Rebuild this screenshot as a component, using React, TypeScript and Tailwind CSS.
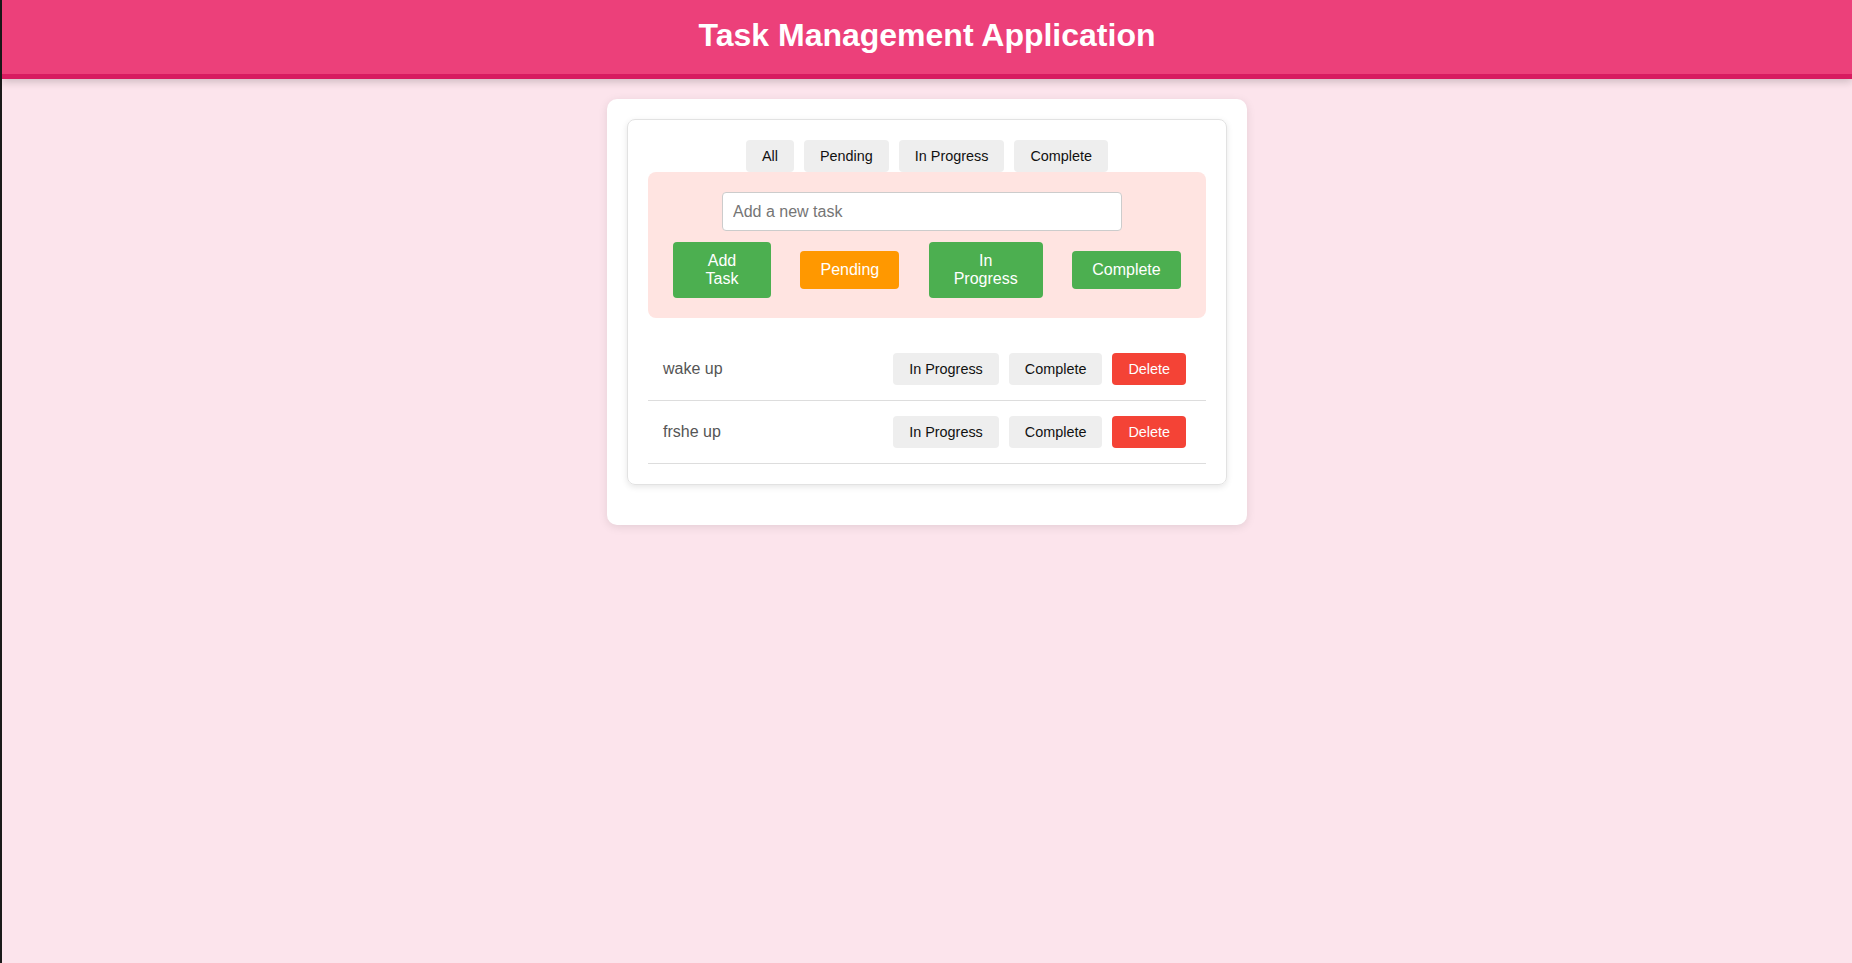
import React, { useState } from "react";

type Status = "Pending" | "In Progress" | "Complete";

interface Task {
  id: number;
  text: string;
  status: Status;
}

const filters = ["All", "Pending", "In Progress", "Complete"];

const App: React.FC = () => {
  const [tasks, setTasks] = useState<Task[]>([
    { id: 1, text: "wake up", status: "Pending" },
    { id: 2, text: "frshe up", status: "Pending" },
  ]);
  const [input, setInput] = useState("");
  const [filter, setFilter] = useState("All");

  const addTask = () => {
    if (!input.trim()) return;
    setTasks([...tasks, { id: Date.now(), text: input, status: "Pending" }]);
    setInput("");
  };

  const setStatus = (id: number, status: Status) =>
    setTasks(tasks.map((t) => (t.id === id ? { ...t, status } : t)));

  const shown = tasks.filter((t) => filter === "All" || t.status === filter);

  return (
    <div
      className="min-h-screen bg-[#fce4ec] border-l-2 border-[#1a1a1a]"
      style={{ fontFamily: '"Liberation Sans", Arial, sans-serif' }}
    >
      <header className="h-[79px] bg-[#ec407a] border-b-[5px] border-[#d81b60] shadow-[0_3px_8px_rgba(0,0,0,0.18)] flex items-center justify-center pb-[5px]">
        <h1 className="text-[32px] font-bold text-white leading-none">
          Task Management Application
        </h1>
      </header>

      <div className="flex justify-center pt-[20px]">
        <div className="w-[640px] bg-white rounded-[10px] shadow-[0_2px_10px_rgba(0,0,0,0.1)] px-[20px] pt-[20px] pb-[40px]">
          <div className="border border-[#e2e2e2] rounded-[8px] shadow-[0_2px_6px_rgba(0,0,0,0.1)] p-[20px]">
            <div className="flex justify-center gap-[10px]">
              {filters.map((f) => (
                <button
                  key={f}
                  onClick={() => setFilter(f)}
                  className="bg-[#eeeeee] text-[#111] text-[14.4px] leading-[16px] px-4 py-2 rounded-[4px]"
                >
                  {f}
                </button>
              ))}
            </div>

            <div className="bg-[#ffe4e1] rounded-[8px] pt-[20px] pb-[20px] px-[25px]">
              <div className="flex justify-center">
                <input
                  value={input}
                  onChange={(e) => setInput(e.target.value)}
                  placeholder="Add a new task"
                  className="w-[400px] h-[39px] mr-[10px] bg-white border border-[#cccccc] rounded-[4px] px-[10px] text-[16px] text-[#333] placeholder:text-[#757575] outline-none"
                />
              </div>
              <div className="flex justify-between items-center mt-[11px]">
                <button
                  onClick={addTask}
                  className="w-[98px] bg-[#4caf50] text-white text-[16px] leading-[18px] px-[20px] py-[10px] rounded-[4px]"
                >
                  Add Task
                </button>
                <button
                  onClick={() => setFilter("Pending")}
                  className="w-[99px] bg-[#ff9800] text-white text-[16px] leading-[18px] px-[20px] py-[10px] rounded-[4px]"
                >
                  Pending
                </button>
                <button
                  onClick={() => setFilter("In Progress")}
                  className="w-[114px] bg-[#4caf50] text-white text-[16px] leading-[18px] px-[20px] py-[10px] rounded-[4px]"
                >
                  In Progress
                </button>
                <button
                  onClick={() => setFilter("Complete")}
                  className="w-[109px] bg-[#4caf50] text-white text-[16px] leading-[18px] px-[20px] py-[10px] rounded-[4px]"
                >
                  Complete
                </button>
              </div>
            </div>

            <ul className="mt-[20px]">
              {shown.map((t) => (
                <li
                  key={t.id}
                  className="flex items-center justify-between border-b border-[#dddddd] pl-[15px] pr-[20px] py-[15px]"
                >
                  <span className="text-[16px] text-[#555555]">{t.text}</span>
                  <div className="flex gap-[10px]">
                    <button
                      onClick={() => setStatus(t.id, "In Progress")}
                      className="bg-[#eeeeee] text-[#111] text-[14.4px] leading-[16px] px-4 py-2 rounded-[4px]"
                    >
                      In Progress
                    </button>
                    <button
                      onClick={() => setStatus(t.id, "Complete")}
                      className="bg-[#eeeeee] text-[#111] text-[14.4px] leading-[16px] px-4 py-2 rounded-[4px]"
                    >
                      Complete
                    </button>
                    <button
                      onClick={() => setTasks(tasks.filter((x) => x.id !== t.id))}
                      className="bg-[#f44336] text-white text-[14.4px] leading-[16px] px-4 py-2 rounded-[4px]"
                    >
                      Delete
                    </button>
                  </div>
                </li>
              ))}
            </ul>
          </div>
        </div>
      </div>
    </div>
  );
};

export default App;
